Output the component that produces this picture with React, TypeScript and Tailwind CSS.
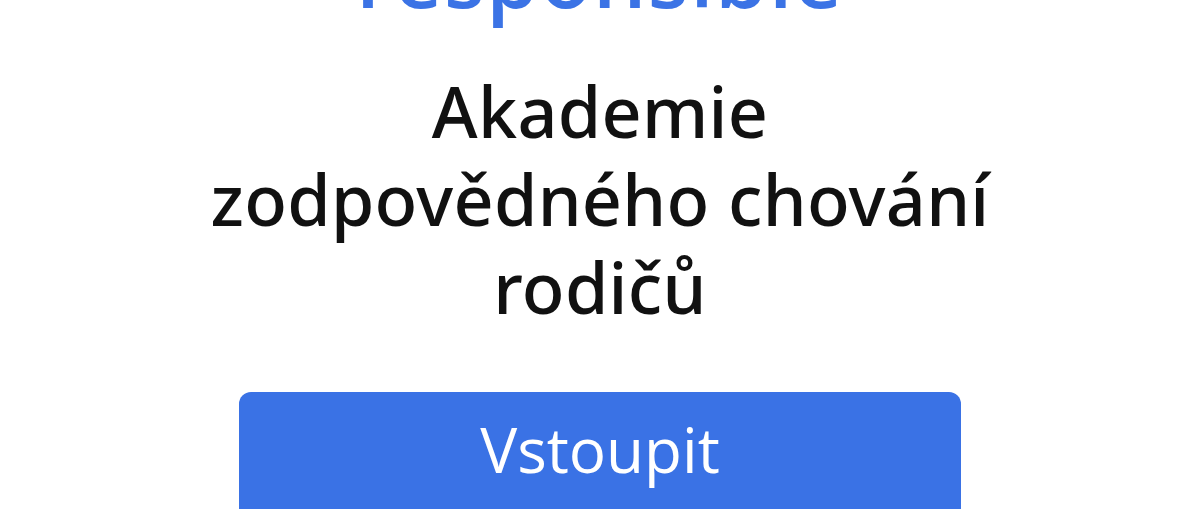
export default function App() {
  return (
    <div className="w-[1200px] h-[509px] overflow-hidden bg-white font-['Open_Sans',sans-serif]">
      <div className="flex flex-col items-center">
        {/* Brand word, cut at the top edge */}
        <p className="-mt-[66px] text-[84px] leading-none font-semibold text-[#3b73e5] tracking-[1.5px]">
          responsible
        </p>

        {/* Title */}
        <h1 className="mt-[49px] w-[840px] text-center font-['Noto_Sans',sans-serif] text-[70px] leading-[88px] font-medium tracking-[0.3px] text-[#111111]">
          Akademie
          <br />
          zodpovědného chování
          <br />
          rodičů
        </h1>

        {/* Enter button */}
        <button className="mt-[61px] w-[722px] rounded-[12px] bg-[#3a72e5] pt-[26px] pb-[40px] text-[62px] leading-none font-medium text-white">
          Vstoupit
        </button>
      </div>
    </div>
  )
}
